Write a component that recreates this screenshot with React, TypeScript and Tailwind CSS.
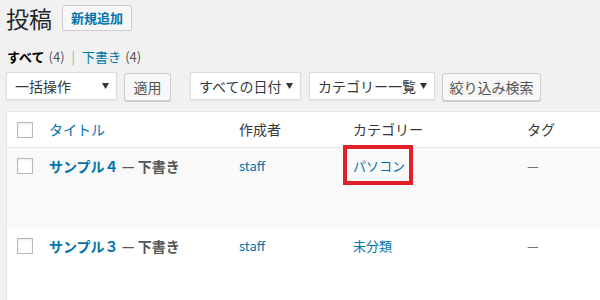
const cols = "grid grid-cols-[42px_190px_114px_174px_1fr]"

function Checkbox() {
  return <span className="block w-[16px] h-[16px] ml-[10px] border border-[#b4b9be] bg-white shadow-[inset_0_1px_2px_rgba(0,0,0,0.1)]" />
}

function Select({ label, className }: { label: string; className: string }) {
  return (
    <div className={`flex items-center justify-between h-[28px] pl-[8px] pr-[7px] bg-white border border-[#ddd] shadow-[0_1px_2px_rgba(0,0,0,0.07)] text-[14px] text-[#32373c] ${className}`}>
      <span className="leading-[20px]">{label}</span>
      <svg width="7" height="6" viewBox="0 0 7 6" className="shrink-0">
        <path d="M0 0H7L3.5 6Z" fill="#333" />
      </svg>
    </div>
  )
}

function Button({ label, className }: { label: string; className: string }) {
  return (
    <div className={`flex items-center justify-center h-[28px] bg-[#f7f7f7] border border-[#ccc] rounded-[3px] shadow-[0_1px_0_#ccc] text-[14px] text-[#555] ${className}`}>
      {label}
    </div>
  )
}

const rows = [
  { title: "サンプル４", category: "パソコン", marked: true, bg: "bg-[#f9f9f9]" },
  { title: "サンプル３", category: "未分類", marked: false, bg: "bg-white" },
]

export default function App() {
  return (
    <div className="w-[600px] h-[300px] overflow-hidden bg-[#f1f1f1] text-[#23282d] font-['Noto_Sans_CJK_JP',sans-serif]">
      {/* heading */}
      <div className="flex items-center pl-[6px] pt-[5px]">
        <h1 className="text-[23px] leading-[26px] font-normal">投稿</h1>
        <div className="ml-[10px] flex items-center h-[26px] px-[8px] bg-[#f7f7f7] border border-[#ccc] rounded-[2px] text-[13px] font-bold text-[#0073aa]">
          新規追加
        </div>
      </div>

      {/* status links */}
      <div className="mt-[17px] pl-[7px] text-[13px] leading-[18px] flex items-center">
        <span className="font-bold text-[#000]">すべて</span>
        <span className="ml-[4px] text-[#555]">(4)</span>
        <span className="mx-[7px] text-[#aaa]">|</span>
        <span className="text-[#0073aa]">下書き</span>
        <span className="ml-[4px] text-[#555]">(4)</span>
      </div>

      {/* filters */}
      <div className="mt-[6px] pl-[6px] flex items-start">
        <Select label="一括操作" className="w-[111px]" />
        <Button label="適用" className="ml-[7px] w-[47px] mt-[1px]" />
        <Select label="すべての日付" className="ml-[19px] w-[111px]" />
        <Select label="カテゴリー一覧" className="ml-[8px] w-[126px]" />
        <Button label="絞り込み検索" className="ml-[7px] w-[99px] mt-[1px]" />
      </div>

      {/* posts table */}
      <div className="mt-[10px] ml-[6px] w-[620px] bg-white border border-[#e5e5e5] shadow-[0_1px_1px_rgba(0,0,0,0.04)]">
        <div className={`${cols} items-center h-[36px] border-b border-[#e1e1e1] text-[14px] text-[#32373c]`}>
          <Checkbox />
          <span className="text-[#0073aa]">タイトル</span>
          <span>作成者</span>
          <span>カテゴリー</span>
          <span>タグ</span>
        </div>
        {rows.map((r) => (
          <div key={r.title} className={`${cols} items-start h-[80px] ${r.bg} text-[13px] leading-[20px]`}>
            <div className="pt-[10px]">
              <Checkbox />
            </div>
            <div className="pt-[8px] text-[14px] font-bold">
              <span className="text-[#0073aa]">{r.title}</span>
              <span className="text-[#555]"> — 下書き</span>
            </div>
            <div className="pt-[8px] text-[#0073aa]">staff</div>
            <div className="pt-[8px]">
              <span className="relative text-[#0073aa]">
                {r.category}
                {r.marked && (
                  <span className="absolute -left-[10px] -right-[8px] -top-[11px] -bottom-[10px] border-[4px] border-[#e3202a]" />
                )}
              </span>
            </div>
            <div className="pt-[8px] text-[#555]">—</div>
          </div>
        ))}
      </div>
    </div>
  )
}
